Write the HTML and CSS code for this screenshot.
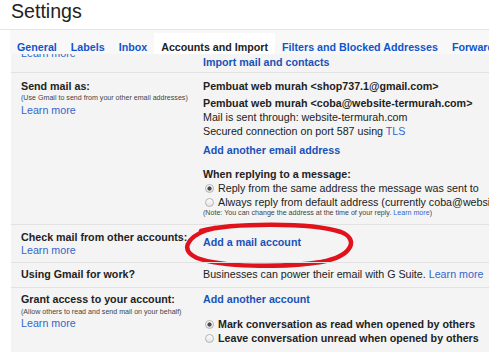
FILE: index.html
```html
<!DOCTYPE html>
<html lang="en">
<head>
    <meta charset="UTF-8">
    <title>Settings</title>
    <link rel="stylesheet" href="styles.css">
</head>
<body>
    <div class="header">
        <h1>Settings</h1>
    </div>

    <div class="tabs">
        <a class="tab">General</a>
        <a class="tab">Labels</a>
        <a class="tab">Inbox</a>
        <span class="tab active">Accounts and Import</span>
        <a class="tab">Filters and Blocked Addresses</a>
        <a class="tab">Forwarding and POP/IMAP</a>
    </div>

    <div class="content">
        <div class="row row-cut">
            <div class="label"><a class="learn cut">Learn more</a></div>
            <div class="value"><a class="action import">Import mail and contacts</a></div>
        </div>

        <div class="row row-send">
            <div class="label">
                <b>Send mail as:</b>
                <div class="hint">(Use Gmail to send from your other email addresses)</div>
                <a class="learn">Learn more</a>
            </div>
            <div class="value">
                <div class="address"><b>Pembuat web murah &lt;shop737.1@gmail.com&gt;</b></div>
                <div class="address second">
                    <b>Pembuat web murah &lt;coba@website-termurah.com&gt;</b>
                    <div>Mail is sent through: website-termurah.com</div>
                    <div>Secured connection on port 587 using <a class="learn">TLS</a></div>
                </div>
                <a class="action add-address">Add another email address</a>
                <div class="reply">
                    <b>When replying to a message:</b>
                    <div class="option"><span class="radio on"></span>Reply from the same address the message was sent to</div>
                    <div class="option"><span class="radio"></span>Always reply from default address (currently coba@website-termurah.com)</div>
                    <div class="hint">(Note: You can change the address at the time of your reply. <a class="learn">Learn more</a>)</div>
                </div>
            </div>
        </div>

        <div class="row row-check">
            <div class="label">
                <b>Check mail from other accounts:</b>
                <a class="learn">Learn more</a>
            </div>
            <div class="value">
                <a class="action add-mail">Add a mail account</a>
            </div>
            <svg class="circle" width="176" height="46" viewBox="0 0 176 46">
                <path d="M20 9 C 50 1, 130 0, 160 10 C 178 17, 172 34, 140 40 C 100 46, 40 45, 16 36 C 0 29, 4 16, 26 8 L 34 6" fill="none" stroke="#e0121c" stroke-width="4.5" stroke-linecap="round"/>
            </svg>
        </div>

        <div class="row row-work">
            <div class="label"><b>Using Gmail for work?</b></div>
            <div class="value">
                <div>Businesses can power their email with G Suite. <a class="learn">Learn more</a></div>
            </div>
        </div>

        <div class="row row-grant">
            <div class="label">
                <b>Grant access to your account:</b>
                <div class="hint">(Allow others to read and send mail on your behalf)</div>
                <a class="learn">Learn more</a>
            </div>
            <div class="value">
                <a class="action">Add another account</a>
                <div class="grant-options">
                    <div class="option"><span class="radio on"></span><b>Mark conversation as read when opened by others</b></div>
                    <div class="option"><span class="radio"></span><b>Leave conversation unread when opened by others</b></div>
                </div>
            </div>
        </div>
    </div>
</body>
</html>
```

FILE: styles.css
```css
* {
    box-sizing: border-box;
    margin: 0;
    padding: 0;
}

body {
    font-family: "Liberation Sans", Arial, sans-serif;
    font-size: 10.7px;
    line-height: 14px;
    color: #222;
    background: #fff;
    white-space: nowrap;
    overflow: hidden;
}

a {
    cursor: pointer;
}

.header {
    height: 30px;
    padding-left: 11px;
    border-bottom: 1px solid #e5e5e5;
}

.header h1 {
    font-size: 19.6px;
    font-weight: normal;
    line-height: 22px;
    color: #222;
}

.tabs {
    display: flex;
    align-items: flex-end;
    height: 24px;
    margin-left: 10px;
    background: #f8f8f8;
    position: relative;
    z-index: 1;
}

.tab {
    height: 21px;
    padding: 7px 7px 0;
    font-weight: bold;
    color: #15c;
    flex-shrink: 0;
}

.tab.active {
    color: #222;
    background: #fff;
}

.content {
    margin-left: 11px;
    background: #f4f4f4;
    overflow: hidden;
    height: 298px;
}

.row {
    display: grid;
    grid-template-columns: 182px 1fr;
    padding-left: 10px;
    border-top: 1px solid #e2e2e2;
    position: relative;
}

.label,
.value {
    display: flex;
    flex-direction: column;
    align-items: flex-start;
}

.learn {
    color: #36c;
}

.action {
    font-weight: bold;
    color: #1a52b8;
}

.hint {
    font-size: 7.1px;
    line-height: 9px;
    color: #444;
}

/* row partly hidden under the tab bar */
.row-cut {
    height: 18px;
    border-top: none;
}

.row-cut .cut {
    margin-top: -7px;
    line-height: 13px;
}

.row-cut .import {
    padding-top: 2px;
    line-height: 13px;
}

.row-send {
    padding: 6px 0 6px 10px;
}

.row-send .label .hint {
    margin-top: 1px;
}

.address.second {
    margin-top: 3px;
    display: flex;
    flex-direction: column;
}

.add-address {
    margin-top: 5px;
}

.reply {
    margin-top: 10px;
    display: flex;
    flex-direction: column;
}

.option {
    display: flex;
    align-items: center;
    line-height: 14px;
}

.radio {
    width: 9px;
    height: 9px;
    margin: 0 4px 0 2px;
    border: 1px solid #b3b3b3;
    border-radius: 50%;
    background: linear-gradient(#fefefe, #e4e4e4);
    flex-shrink: 0;
}

.radio.on {
    background: radial-gradient(circle, #4a4a4a 0 1.8px, transparent 2.4px), linear-gradient(#fefefe, #e4e4e4);
}

.row-check {
    padding: 6px 0 5px 10px;
    line-height: 13px;
}

.add-mail {
    margin-top: 5px;
}

.circle {
    position: absolute;
    left: 170px;
    top: -3px;
}

.row-work {
    padding: 5px 0 6px 10px;
    line-height: 13px;
}

.row-grant {
    padding: 5px 0 8px 10px;
    line-height: 13px;
}

.row-grant .label .hint {
    margin-top: 2px;
}

.grant-options {
    margin-top: 11px;
}
```
